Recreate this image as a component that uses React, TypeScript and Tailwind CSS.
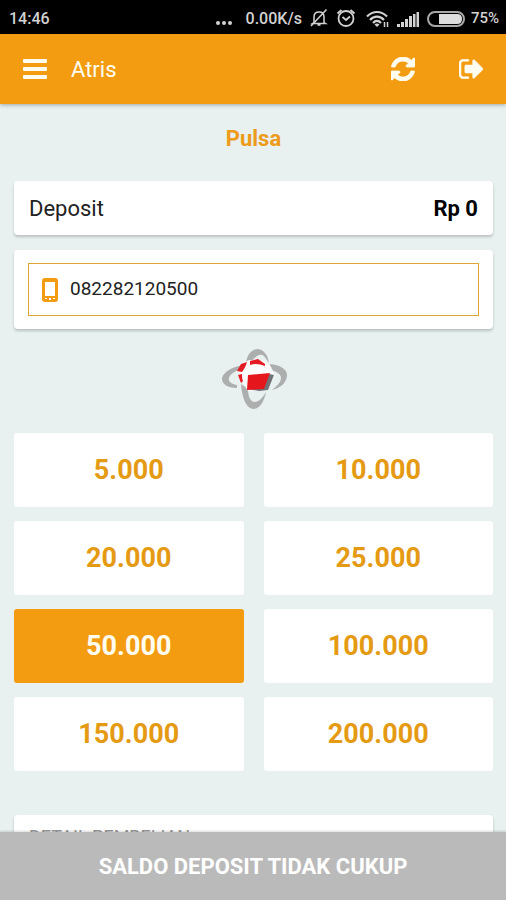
import { useState } from "react";

const amounts = ["5.000", "10.000", "20.000", "25.000", "50.000", "100.000", "150.000", "200.000"];

function StatusBar() {
  return (
    <div className="flex h-[34px] shrink-0 items-center justify-between bg-black pt-[3px] pr-[7px] pl-[9px] text-base font-medium text-[#d2d2d2]">
      <span>14:46</span>
      <div className="flex items-center">
        <svg className="mt-2 mr-[14px] h-1 w-4" viewBox="0 0 16 4" fill="currentColor" aria-hidden="true">
          <circle cx="2" cy="2" r="2" />
          <circle cx="8" cy="2" r="2" />
          <circle cx="14" cy="2" r="2" />
        </svg>
        <span className="mr-2">0.00K/s</span>
        <svg className="mr-2 mb-[2px] size-[18px]" viewBox="0 0 18 18" fill="none" stroke="currentColor" strokeWidth="1.500" aria-hidden="true">
          <path d="M4 13.500V8C4 4.800 6 3 9 3s5 2 5 5v5.500l1.500 1H2.500zM1 17 16.500.5M7.500 16h3" />
        </svg>
        <svg className="mr-[10px] mb-[2px] h-[18px] w-5" viewBox="0 0 20 18" fill="none" stroke="currentColor" strokeWidth="1.800" aria-hidden="true">
          <circle cx="10" cy="9.500" r="7.500" />
          <path d="M6.500 8 10 11l4-3.500M1.500 4.500l4-3.500M18.500 4.500l-4-3.500" />
        </svg>
        <svg className="mr-2 h-[18px] w-[23px]" viewBox="0 0 23 18" fill="none" stroke="currentColor" strokeWidth="2.200" aria-hidden="true">
          <path d="M1 6.500c6-6 14-6 20 0M4 10c4-4.500 10-4.500 14 0M7 13c2.500-2.800 5.500-2.800 8 0" />
          <path d="m8.500 14.500 2.500 2.500 2.500-2.500c-1.500-1.300-3.500-1.300-5 0z" fill="currentColor" stroke="none" />
          <path d="M18.500 12V17M21.500 12V17" strokeWidth="1.500" />
        </svg>
        <svg className="mr-2 h-4 w-[22px]" viewBox="0 0 22 16" fill="currentColor" aria-hidden="true">
          <path d="M0 13h3v3H0zM4 11h3v5H4zM8 8h3v8H8zM12 5h3v11h-3zM16 3h2.500v13H16zM19.500 1H22v15h-2.500z" />
        </svg>
        <svg className="mr-[6px] h-4 w-[38px]" viewBox="0 0 38 16" aria-hidden="true">
          <rect x="1" y="1" width="36" height="14" rx="7" fill="none" stroke="#a8a8a8" strokeWidth="2" />
          <path d="M12 3h18q5 0 5 5t-5 5H12z" fill="#dddddd" />
        </svg>
        <span className="text-[15px]">75%</span>
      </div>
    </div>
  );
}

function Header() {
  return (
    <header className="z-10 flex h-[70px] shrink-0 items-center bg-[#f39c12] px-[23px] text-[#fffdf0] shadow-[0_1px_4px_rgba(0,0,0,0.3)]">
      <button type="button" aria-label="Menu">
        <svg className="h-5 w-6" viewBox="0 0 24 20" fill="currentColor">
          <rect width="24" height="4" rx="1" />
          <rect y="8" width="24" height="4" rx="1" />
          <rect y="16" width="24" height="4" rx="1" />
        </svg>
      </button>
      <h1 className="ml-6 grow text-[22px]">Atris</h1>
      <button type="button" aria-label="Refresh">
        <svg className="size-6" viewBox="0 0 1536 1536" fill="currentColor" stroke="currentColor" strokeWidth="50">
          <path d="M1511 928q0 5-1 7-64 268-268 434.500t-478 166.500q-146 0-282.500-55t-243.500-157l-129 129q-19 19-45 19t-45-19-19-45v-448q0-26 19-45t45-19h448q26 0 45 19t19 45-19 45l-137 137q71 66 161 102t187 36q134 0 250-65t186-179q11-17 53-117 8-23 30-23h192q13 0 22.500 9.500t9.500 22.500zm25-800v448q0 26-19 45t-45 19h-448q-26 0-45-19t-19-45 19-45l138-138q-148-137-349-137-134 0-250 65t-186 179q-11 17-53 117-8 23-30 23h-199q-13 0-22.500-9.500t-9.500-22.500v-7q65-268 270-434.500t480-166.500q146 0 284 55.500t245 156.500l130-129q19-19 45-19t45 19 19 45z" />
        </svg>
      </button>
      <button type="button" aria-label="Sign out" className="ml-11">
        <svg className="h-5 w-6" viewBox="0 256 1568 1280" fill="currentColor" stroke="currentColor" strokeWidth="40">
          <path d="M640 1440q0 4 1 20t.5 26.500-3 23.500-10 19.500-20.500 6.500h-320q-119 0-203.500-84.500t-84.500-203.500v-704q0-119 84.500-203.500t203.500-84.500h320q13 0 22.500 9.500t9.500 22.500q0 4 1 20t.5 26.500-3 23.500-10 19.500-20.500 6.500h-320q-66 0-113 47t-47 113v704q0 66 47 113t113 47h312l11.500 1 11.500 3 8 5.500 7 9 2 13.500zm928-544q0 26-19 45l-544 544q-19 19-45 19t-45-19-19-45v-288h-448q-26 0-45-19t-19-45v-384q0-26 19-45t45-19h448v-288q0-26 19-45t45-19 45 19l544 544q19 19 19 45z" />
        </svg>
      </button>
    </header>
  );
}

function OperatorLogo() {
  return (
    <svg className="mx-auto mt-[19px] h-[62px] w-[66px]" viewBox="0 0 66 62" role="img" aria-label="Operator">
      <path d="M23 17C9 19 0 26 1 32c1 5 7 8 15 8v-3c-6-1-9-4-8-7 1-4 6-7 12-9z" fill="#adafaf" />
      <path d="M49 16c10 1 17 5 17 11 0 7-6 13-15 15 5-4 9-8 9-12 0-4-4-6-10-8z" fill="#adafaf" />
      <path d="M25 15C26 6 31 1 37 1c6 1 10 6 11 14l-5-7c-4-3-8 0-12 5z" fill="#adafaf" />
      <path d="M20 36c1 14 5 24 12 25 7 0 11-7 13-17-4 7-8 10-12 10-4-1-6-6-6-13z" fill="#adafaf" />
      <path d="m22 15 6-3 16 1 6 6 4 8-7 15-20 1-6-10-3-9z" fill="#fbfbfb" />
      <path d="m29 13 8-2 7 5v2c-5-2-10-3-15-1zM20 16l6-2c-1 4-3 7-5 10l-5-1zM17 27l4-1c0 3 0 5 1 7l-2 2z" fill="#e51b23" />
      <path d="m48 26 5 1-6 15-9 1-11-2 15-1z" fill="#707275" />
      <path d="m27 27 22-2-6 16-17 1z" fill="#e6161d" />
    </svg>
  );
}

const card = "rounded-[4px] bg-white shadow-[0_2px_3px_rgba(0,0,0,0.2)]";

export default function App() {
  const [selected, setSelected] = useState("50.000");
  const [phone, setPhone] = useState("082282120500");

  return (
    <div className="flex h-dvh flex-col bg-[#e8f0f0] font-[Roboto,'Liberation_Sans',sans-serif] text-[#222222]">
      <StatusBar />
      <Header />
      <main className="min-h-0 grow overflow-y-auto pr-[13px] pl-[14px] [scrollbar-width:none]">
        <h2 className="py-5 text-center text-[22px] leading-[30px] font-bold text-[#ec9b1b]">Pulsa</h2>
        <section className={`mt-[7px] flex h-[54px] items-center justify-between px-[15px] text-[22px] ${card}`}>
          <span>Deposit</span>
          <strong className="font-bold text-black">Rp 0</strong>
        </section>
        <section className={`mt-[15px] px-[14px] py-[13px] ${card}`}>
          <label className="flex h-[53px] items-center border border-[#dfa637] pl-[13px]">
            <svg className="h-6 w-4 text-[#f39c12]" viewBox="0 0 16 24" aria-hidden="true">
              <path
                d="M3 0h10q3 0 3 3v18q0 3-3 3H3q-3 0-3-3V3q0-3 3-3zM3 4v14h10V4zM7 20v2h2v-2zM3 20v1h2v-1zM11 20v1h2v-1z"
                fill="currentColor"
                fillRule="evenodd"
              />
            </svg>
            <input
              type="tel"
              aria-label="Nomor telepon"
              value={phone}
              onChange={(e) => setPhone(e.target.value)}
              className="ml-3 min-w-0 grow bg-transparent text-[19px] outline-none"
            />
          </label>
        </section>
        <OperatorLogo />
        <div className="mt-[23px] grid grid-cols-2 gap-x-5 gap-y-[14px]">
          {amounts.map((amount) => (
            <button
              key={amount}
              type="button"
              aria-pressed={amount === selected}
              onClick={() => setSelected(amount)}
              className={`h-[74px] rounded-[3px] text-[27px] font-bold ${
                amount === selected ? "bg-[#f39c12] text-[#fffdf0]" : "bg-white text-[#e59a13]"
              }`}
            >
              {amount}
            </button>
          ))}
        </div>
        <section className={`mt-11 mb-4 px-[15px] pt-3 pb-6 ${card}`}>
          <h3 className="text-lg leading-5 text-[#999999]">DETAIL PEMBELIAN</h3>
        </section>
      </main>
      <button type="button" className="z-10 h-[68px] shrink-0 bg-[#bababa] text-[22px] font-bold text-white shadow-[0_-1px_2px_rgba(0,0,0,0.15)]">
        SALDO DEPOSIT TIDAK CUKUP
      </button>
    </div>
  );
}
